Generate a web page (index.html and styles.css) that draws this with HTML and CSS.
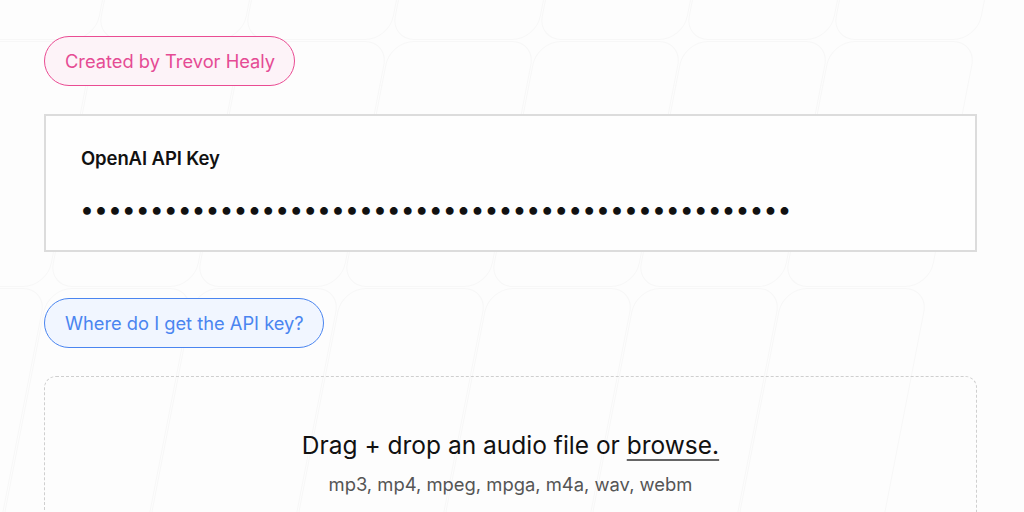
FILE: index.html
```html
<!DOCTYPE html>
<html lang="en">
<head>
<meta charset="utf-8">
<title>Whisper transcriber</title>
<link rel="stylesheet" href="styles.css">
</head>
<body>
<div class="pattern" aria-hidden="true">
  <div class="tiles">
    <span></span><span></span><span></span><span></span><span></span><span></span><span></span><span></span>
    <span></span><span></span><span></span><span></span><span></span><span></span><span></span><span></span>
    <span></span><span></span><span></span><span></span><span></span><span></span><span></span><span></span>
    <span></span><span></span><span></span><span></span><span></span><span></span><span></span><span></span>
  </div>
</div>
<main class="page">
  <a class="pill pill-pink" href="#">Created by Trevor Healy</a>
  <section class="key-card">
    <label class="key-label" for="key">OpenAI API Key</label>
    <input id="key" class="key-input" type="password" value="sk-abcdefghijklmnopqrstuvwxyz0123456789ABCDEFGHIJKL">
  </section>
  <a class="pill pill-blue" href="#">Where do I get the API key?</a>
  <section class="dropzone">
    <p class="drop-title">Drag + drop an audio file or <a class="browse" href="#">browse.</a></p>
    <p class="drop-formats">mp3, mp4, mpeg, mpga, m4a, wav, webm</p>
  </section>
</main>
</body>
</html>
```
FILE: styles.css
```css
* { box-sizing: border-box; }
html, body { margin: 0; height: 100%; }
body {
  background: #fdfdfd;
  font-family: Inter, "Noto Sans", sans-serif;
  color: #111;
  overflow: hidden;
  position: relative;
}
.pattern {
  position: absolute;
  inset: 0;
  overflow: hidden;
  z-index: 0;
}
.tiles {
  position: absolute;
  left: -150px;
  top: -206px;
  display: grid;
  grid-template-columns: repeat(8, 146px);
  grid-auto-rows: 246px;
  gap: 1px;
  transform: skewX(-11deg);
  transform-origin: 0 0;
}
.tiles span {
  border: 1px solid #f7f7f7;
  border-radius: 24px;
  background: #fdfdfd;
}
.page {
  position: relative;
  z-index: 1;
  padding: 36px 47px 0 44px;
  display: flex;
  flex-direction: column;
  align-items: flex-start;
}
.pill {
  display: inline-flex;
  align-items: center;
  height: 50px;
  padding: 0 19px 1px 20px;
  border-radius: 25px;
  font-size: 18.3px;
  text-decoration: none;
  border: 1px solid;
}
.pill-pink {
  color: #e54b94;
  background: #fdf3f8;
  border-color: #ea4c93;
}
.pill-blue {
  color: #4a85f0;
  background: #f1f6ff;
  border-color: #4a85f0;
  margin-top: 46px;
}
.key-card {
  margin-top: 28px;
  align-self: stretch;
  height: 138px;
  border: 2px solid #dcdcdc;
  background: #fefefe;
  padding: 31px 34px 0 35px;
  display: flex;
  flex-direction: column;
}
.key-label {
  font-size: 18.5px;
  font-weight: 600;
  line-height: 22px;
  color: #111;
  letter-spacing: -0.1px;
}
.key-input {
  margin: 25px 0 0 -1px;
  border: none;
  background: transparent;
  padding: 0;
  font-family: Inter, sans-serif;
  font-size: 24.8px;
  line-height: 30px;
  height: 30px;
  color: #111;
  outline: none;
  width: 100%;
}
.dropzone {
  margin-top: 28px;
  align-self: stretch;
  height: 200px;
  border: 1px dashed #cfcfcf;
  border-radius: 12px;
  display: flex;
  flex-direction: column;
  align-items: center;
  padding-top: 53px;
}
.drop-title {
  margin: 0;
  font-size: 24.5px;
  color: #111;
}
.browse {
  color: #111;
  text-decoration: underline;
  text-decoration-color: #666;
  text-underline-offset: 5px;
  text-decoration-thickness: 2px;
}
.drop-formats {
  margin: 13px 0 0;
  font-size: 18.4px;
  color: #555;
}
```
